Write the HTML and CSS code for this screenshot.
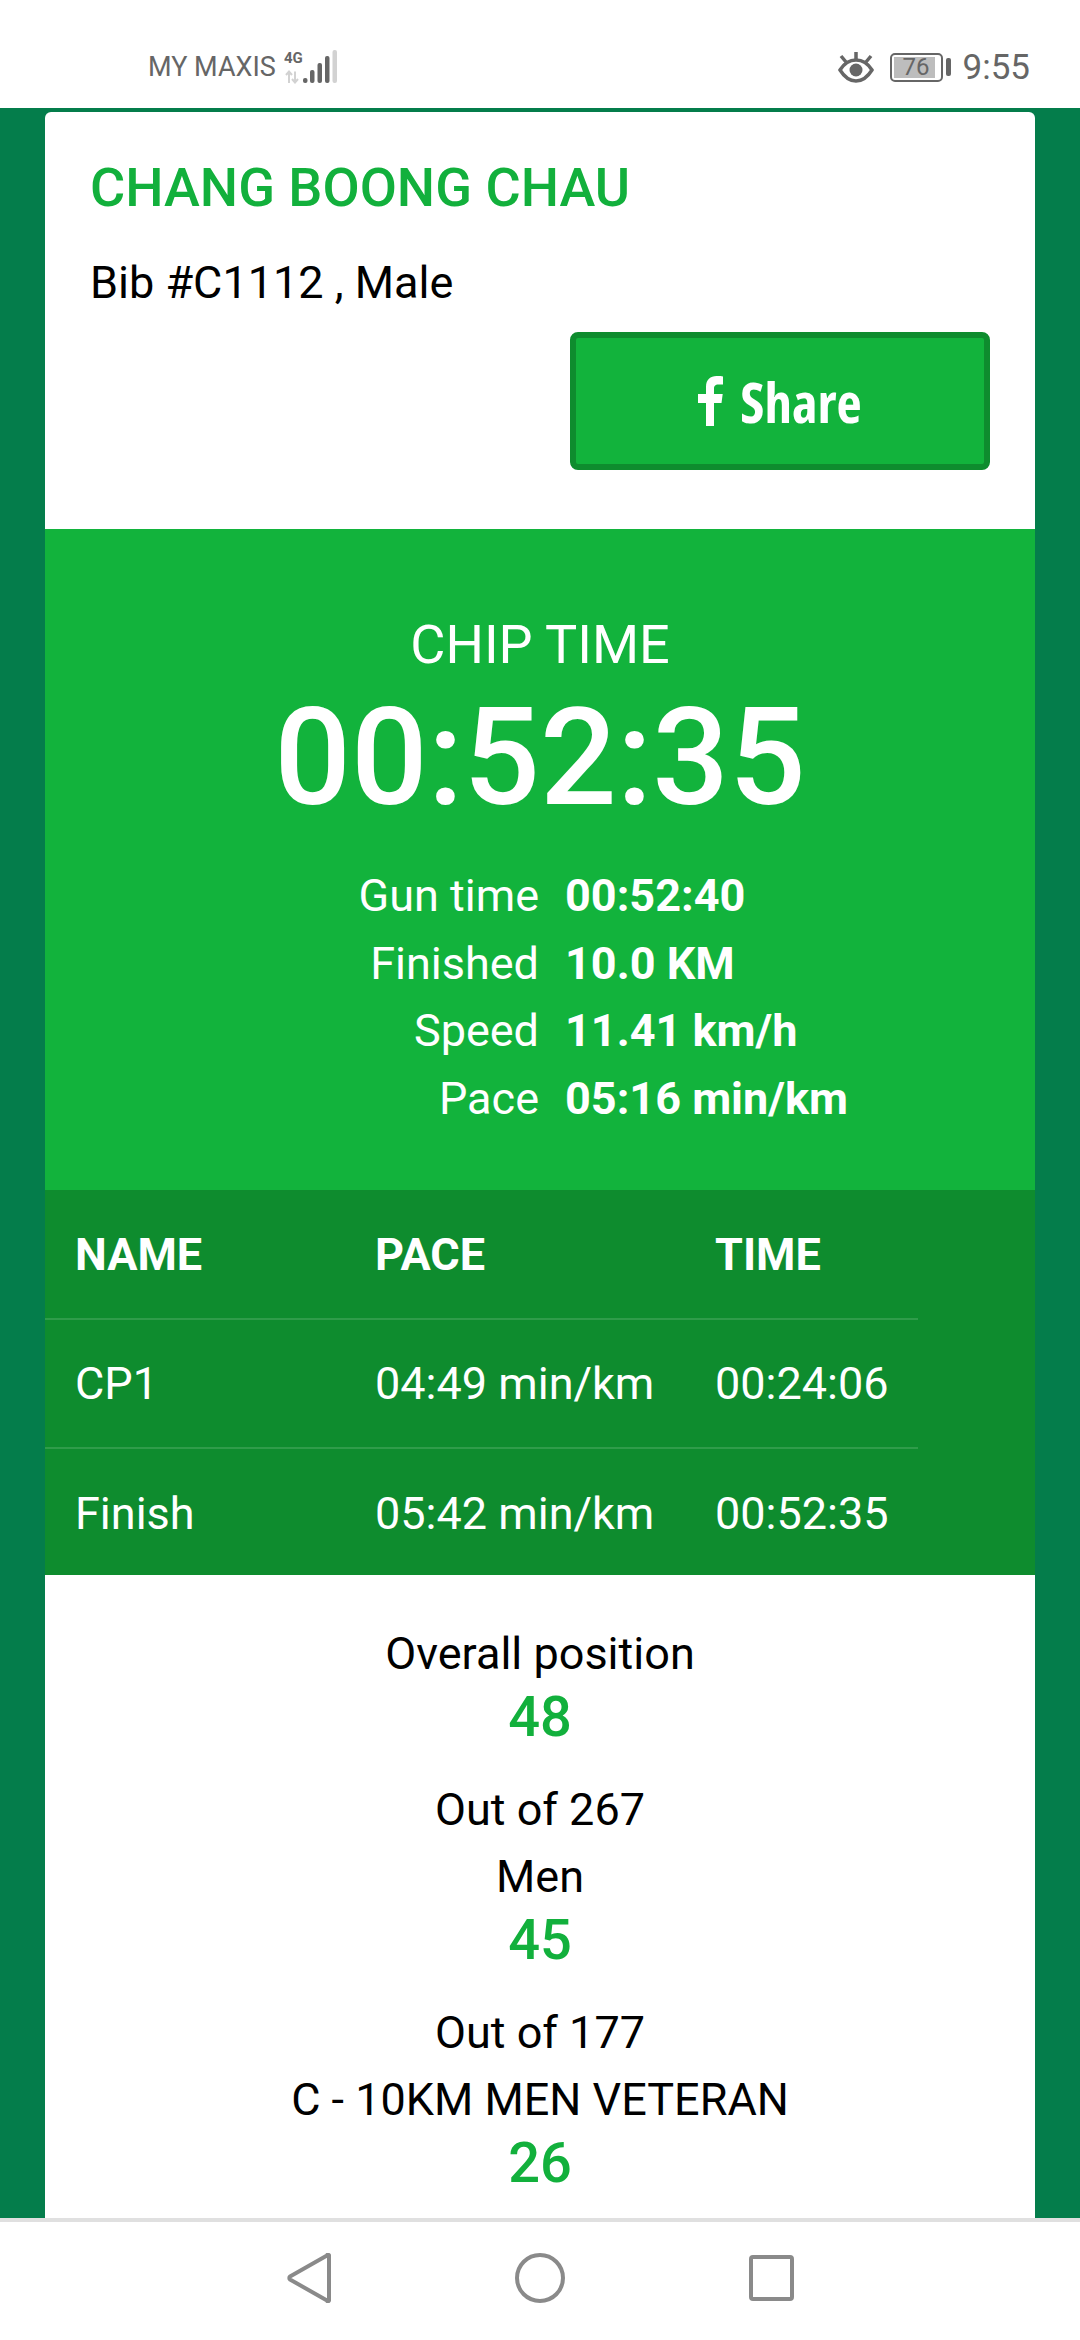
FILE: index.html
```html
<!DOCTYPE html>
<html lang="en">
<head>
  <meta charset="UTF-8">
  <meta name="viewport" content="width=device-width, initial-scale=1.0">
  <title>Race Result</title>
  <link rel="stylesheet" href="styles.css">
</head>
<body>
  <div class="phone">
    <header class="status-bar">
      <div class="status-left">
        <span class="carrier">MY MAXIS</span>
        <svg class="signal" width="54" height="34" viewBox="0 0 54 34">
          <text x="0" y="13" class="net-label">4G</text>
          <path d="M5 33v-11M2 25l3-3.500 3 3.500M11 21.500v11M8 29l3 3.500 3-3.500" fill="none" stroke="#d2d2d2" stroke-width="2"/>
          <rect x="19" y="28" width="4.500" height="5" rx="2" fill="#666"/>
          <rect x="26" y="20" width="4.500" height="13" rx="2" fill="#666"/>
          <rect x="33.500" y="13" width="4.500" height="20" rx="2" fill="#666"/>
          <rect x="41" y="6" width="4.500" height="27" rx="2" fill="#666"/>
          <rect x="48.500" y="0" width="4.500" height="33" rx="2" fill="#d2d2d2"/>
        </svg>
      </div>
      <div class="status-right">
        <svg class="eye" width="36" height="32" viewBox="0 0 36 32">
          <path d="M2 19C7 11 12 9 18 9s11 2 16 10c-5 8-10 11-16 11S7 27 2 19z" fill="none" stroke="#666" stroke-width="3.500"/>
          <circle cx="18" cy="19" r="6.500" fill="#666"/>
          <path d="M18 8V1M8 11L3 5M28 11l5-6" fill="none" stroke="#666" stroke-width="3.500"/>
        </svg>
        <div class="battery">
          <div class="battery-box">
            <div class="battery-level" style="width: 92%"></div>
            <span class="battery-num">76</span>
          </div>
          <div class="battery-tip"></div>
        </div>
        <span class="clock">9:55</span>
      </div>
    </header>

    <main class="page">
      <section class="card">
        <div class="runner">
          <h1 class="runner-name">CHANG BOONG CHAU</h1>
          <p class="runner-info">Bib #C1112 , Male</p>
          <div class="share-row">
            <a class="share-btn" href="#">
              <svg width="26" height="50" viewBox="0 0 26 50">
                <path d="M8 50V27H0v-9h8v-7C8 3.500 12.500 0 18.500 0c2.900 0 5.400.2 6.500.4v8h-4.500c-3.500 0-4.500 1.700-4.500 4.300V18h8.700l-1.200 9H16v23z" fill="#fff"/>
              </svg>
              <span class="share-text">Share</span>
            </a>
          </div>
        </div>

        <div class="chip">
          <div class="chip-label">CHIP TIME</div>
          <div class="chip-time">00:52:35</div>
          <div class="stats">
            <span class="stat-name">Gun time</span><span class="stat-value">00:52:40</span>
            <span class="stat-name">Finished</span><span class="stat-value">10.0 KM</span>
            <span class="stat-name">Speed</span><span class="stat-value">11.41 km/h</span>
            <span class="stat-name">Pace</span><span class="stat-value">05:16 min/km</span>
          </div>
        </div>

        <div class="splits">
          <table>
            <thead>
              <tr>
                <th>NAME</th>
                <th>PACE</th>
                <th>TIME</th>
              </tr>
            </thead>
            <tbody>
              <tr>
                <td>CP1</td>
                <td>04:49 min/km</td>
                <td>00:24:06</td>
              </tr>
              <tr>
                <td>Finish</td>
                <td>05:42 min/km</td>
                <td>00:52:35</td>
              </tr>
            </tbody>
          </table>
        </div>

        <div class="positions">
          <div class="pos-title">Overall position</div>
          <div class="pos-num">48</div>
          <div class="pos-title">Out of 267</div>
          <div class="pos-title">Men</div>
          <div class="pos-num">45</div>
          <div class="pos-title">Out of 177</div>
          <div class="pos-title">C - 10KM MEN VETERAN</div>
          <div class="pos-num">26</div>
        </div>
      </section>
    </main>

    <nav class="nav-bar">
      <svg width="44" height="50" viewBox="0 0 44 50">
        <path d="M42 3v44a1 1 0 0 1-2 .5L3 26.500a2 2 0 0 1 0-3L40 2.500a1 1 0 0 1 2 .5z" fill="none" stroke="#8a8a8a" stroke-width="4" stroke-linejoin="round"/>
      </svg>
      <svg width="50" height="50" viewBox="0 0 50 50">
        <circle cx="25" cy="25" r="23" fill="none" stroke="#8a8a8a" stroke-width="4"/>
      </svg>
      <svg width="45" height="46" viewBox="0 0 45 46">
        <rect x="2" y="2" width="41" height="42" rx="2" fill="none" stroke="#8a8a8a" stroke-width="4"/>
      </svg>
    </nav>
  </div>
</body>
</html>
```

FILE: styles.css
```css
/* General Styles */
* {
  margin: 0;
  padding: 0;
  box-sizing: border-box;
}

body {
  font-family: 'Roboto', sans-serif;
  background-color: #fff;
  color: #000;
}

.phone {
  width: 1080px;
  height: 2340px;
  display: flex;
  flex-direction: column;
  overflow: hidden;
}

/* Status Bar */
.status-bar {
  height: 108px;
  flex-shrink: 0;
  display: flex;
  justify-content: space-between;
  align-items: center;
  padding: 26px 50px 0 148px;
  background: #fff;
  color: #666;
}

.status-left {
  display: flex;
  align-items: center;
  gap: 8px;
}

.carrier {
  font-size: 27px;
}

.net-label {
  font-family: 'Roboto', sans-serif;
  font-size: 15px;
  font-weight: 700;
  fill: #666;
}

.status-right {
  display: flex;
  align-items: center;
}

.eye {
  margin-right: 16px;
}

.battery {
  display: flex;
  align-items: center;
  gap: 3px;
  margin-right: 12px;
}

.battery-box {
  position: relative;
  width: 53px;
  height: 29px;
  border: 2px solid #666;
  border-radius: 5px;
  padding: 2px;
}

.battery-level {
  height: 100%;
  background: #bdbdbd;
}

.battery-num {
  position: absolute;
  top: 0;
  left: 0;
  width: 100%;
  text-align: center;
  font-size: 24px;
  line-height: 25px;
  color: #666;
}

.battery-tip {
  width: 5px;
  height: 18px;
  background: #666;
  border-radius: 2px;
}

.clock {
  font-size: 35px;
}

/* Page */
.page {
  flex: 1;
  min-height: 0;
  overflow: hidden;
  background: #047d4b;
  padding: 4px 45px 0;
}

.card {
  background: #fff;
  border-radius: 6px 6px 0 0;
  overflow: hidden;
}

/* Runner */
.runner {
  height: 417px;
  padding: 46px 45px 0 45px;
}

.runner-name {
  font-size: 54px;
  font-weight: 500;
  line-height: 60px;
  color: #12b03c;
}

.runner-info {
  font-size: 45px;
  line-height: 50px;
  margin-top: 40px;
}

.share-row {
  display: flex;
  justify-content: flex-end;
  margin-top: 24px;
}

.share-btn {
  width: 420px;
  height: 138px;
  display: flex;
  justify-content: center;
  align-items: center;
  gap: 16px;
  background: #12b33c;
  border: 6px solid #0e8c2e;
  border-radius: 8px;
  color: #fff;
  font-family: 'Open Sans', sans-serif;
  font-size: 55px;
  font-weight: 700;
  font-stretch: 75%;
  text-decoration: none;
}

/* Chip Time */
.chip {
  height: 661px;
  background: #12b33c;
  color: #fff;
  padding-top: 84px;
}

.chip-label {
  text-align: center;
  font-size: 54px;
  font-weight: 400;
  line-height: 64px;
}

.chip-time {
  text-align: center;
  font-size: 135px;
  font-weight: 500;
  line-height: 150px;
  margin-top: 6px;
}

.stats {
  display: grid;
  grid-template-columns: 494px 1fr;
  column-gap: 26px;
  margin-top: 29px;
  font-size: 45px;
  line-height: 67.500px;
}

.stat-name {
  text-align: right;
  font-weight: 400;
}

.stat-value {
  font-weight: 700;
}

/* Splits Table */
.splits {
  height: 385px;
  background: #0e8c2e;
  color: #fff;
}

table {
  width: 873px;
  border-collapse: collapse;
  table-layout: fixed;
}

th, td {
  height: 129px;
  padding: 0 0 0 30px;
  text-align: left;
  font-size: 45px;
  white-space: nowrap;
}

th {
  font-weight: 700;
}

td {
  font-weight: 400;
}

th:nth-child(1), td:nth-child(1) {
  width: 300px;
}

th:nth-child(2), td:nth-child(2) {
  width: 340px;
}

tr {
  border-bottom: 2px solid #2f9c4a;
}

tbody tr:last-child {
  border-bottom: none;
}

/* Positions */
.positions {
  padding-top: 45px;
  text-align: center;
}

.pos-title {
  font-size: 45px;
  line-height: 67px;
}

.pos-num {
  font-size: 56px;
  font-weight: 500;
  line-height: 57px;
  color: #12b03c;
  margin-top: 2px;
  margin-bottom: 30px;
}

/* Nav Bar */
.nav-bar {
  height: 122px;
  flex-shrink: 0;
  display: flex;
  justify-content: center;
  align-items: center;
  gap: 184px;
  padding-bottom: 6px;
  background: #fff;
  border-top: 4px solid #e0e0e0;
}
```
